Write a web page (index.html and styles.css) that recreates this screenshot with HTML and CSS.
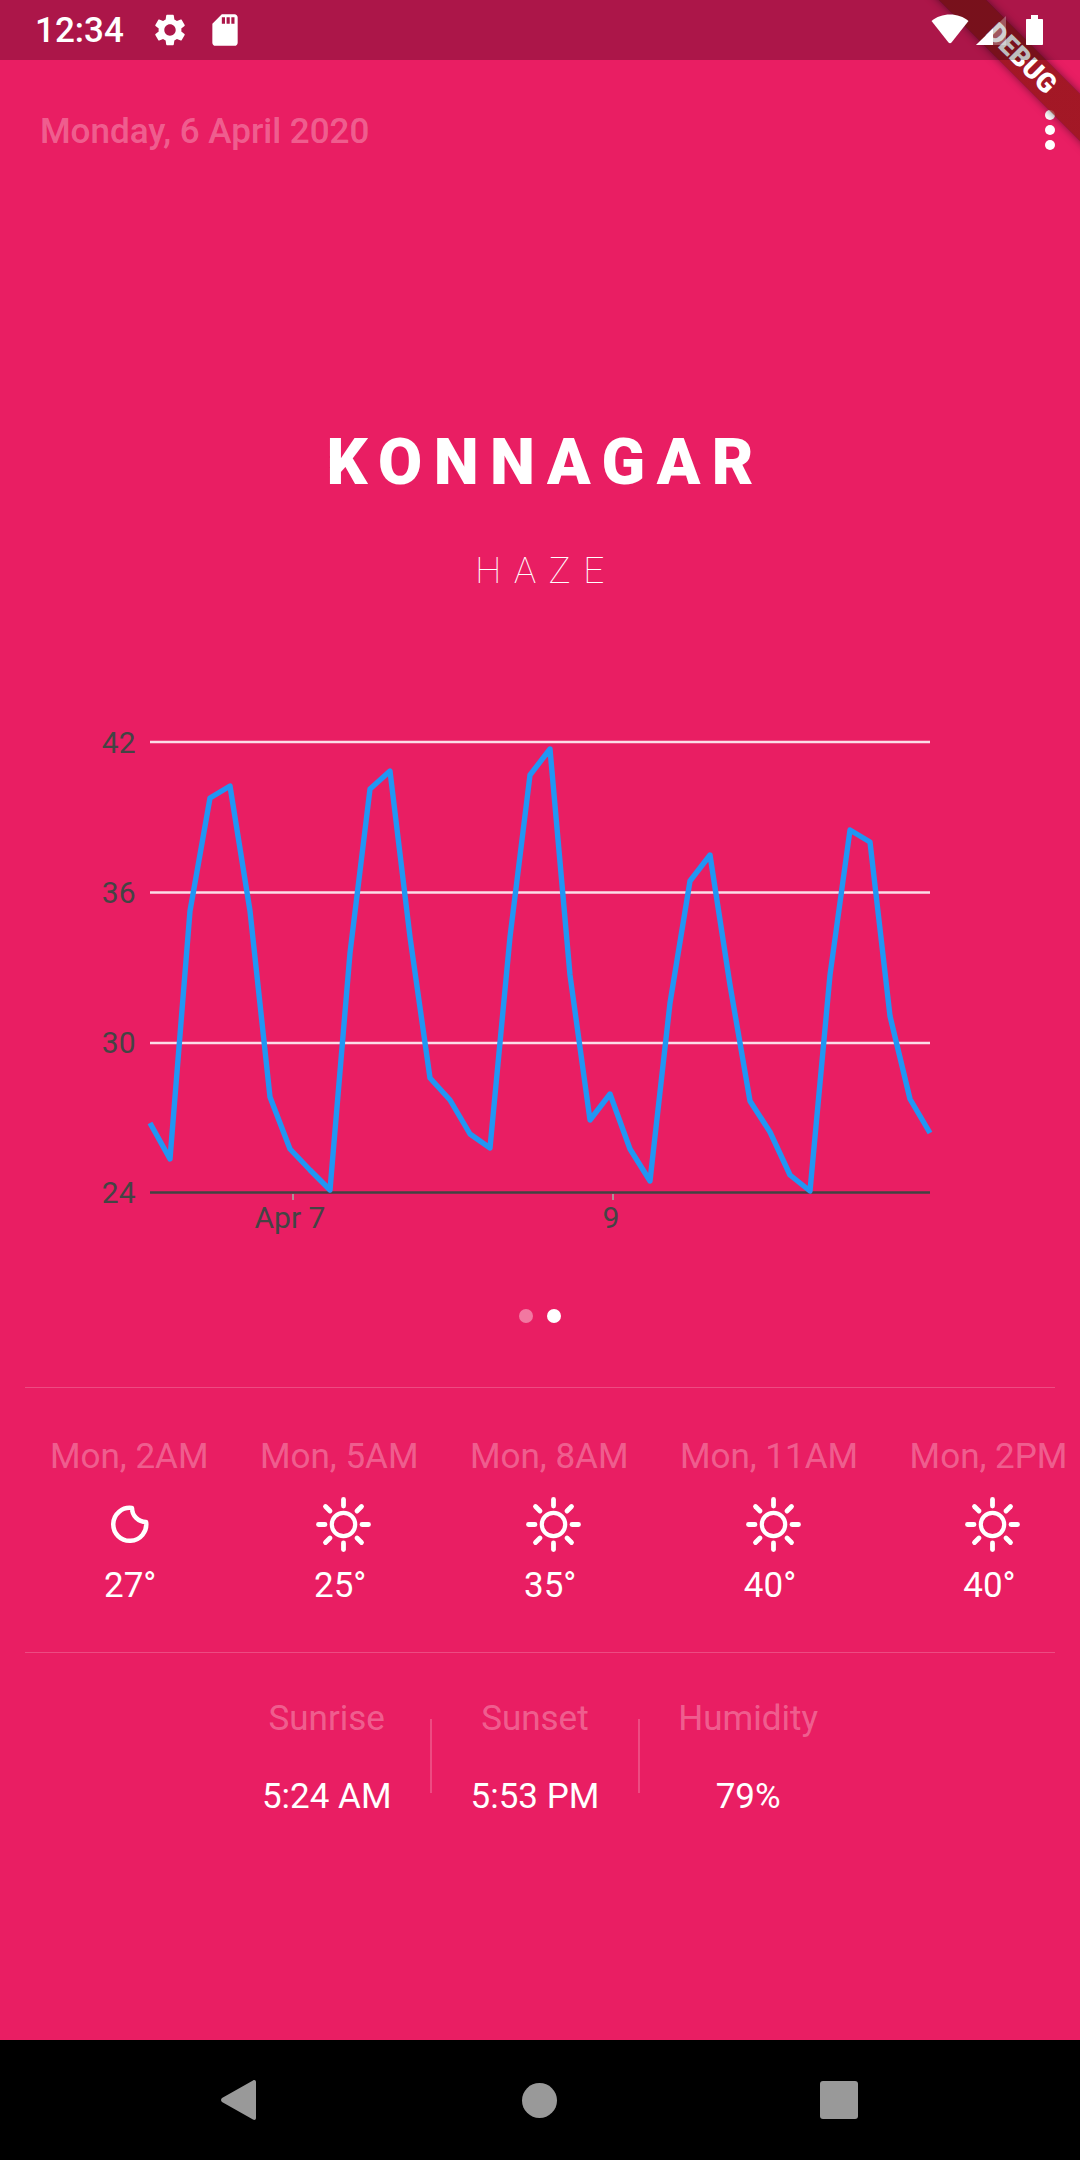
FILE: index.html
```html
<!DOCTYPE html>
<html lang="en">
<head>
    <meta charset="UTF-8">
    <title>Weather</title>
    <link rel="stylesheet" href="styles.css">
</head>
<body>
<div class="app">

    <!-- Status bar -->
    <header class="status-bar">
        <span class="clock">12:34</span>
        <svg class="icon-gear" viewBox="0 0 24 24"><path d="M19.14,12.94c0.04-0.3,0.06-0.61,0.06-0.94c0-0.32-0.02-0.64-0.07-0.94l2.03-1.58c0.18-0.14,0.23-0.41,0.12-0.61l-1.92-3.32c-0.12-0.22-0.37-0.29-0.59-0.22l-2.39,0.96c-0.5-0.38-1.03-0.7-1.62-0.94L14.4,2.81c-0.04-0.24-0.24-0.41-0.48-0.41h-3.84c-0.24,0-0.43,0.17-0.47,0.41L9.25,5.35C8.66,5.59,8.12,5.92,7.63,6.29L5.24,5.33c-0.22-0.08-0.47,0-0.59,0.22L2.74,8.87C2.62,9.08,2.66,9.34,2.86,9.48l2.03,1.58C4.84,11.36,4.8,11.69,4.8,12s0.02,0.64,0.07,0.94l-2.03,1.58c-0.18,0.14-0.23,0.41-0.12,0.61l1.92,3.32c0.12,0.22,0.37,0.29,0.59,0.22l2.39-0.96c0.5,0.38,1.03,0.7,1.62,0.94l0.36,2.54c0.05,0.24,0.24,0.41,0.48,0.41h3.84c0.24,0,0.44-0.17,0.47-0.41l0.36-2.54c0.59-0.24,1.13-0.56,1.62-0.94l2.39,0.96c0.22,0.08,0.47,0,0.59-0.22l1.92-3.32c0.12-0.22,0.07-0.47-0.12-0.61L19.14,12.94z M12,15.6c-1.98,0-3.6-1.62-3.6-3.6s1.62-3.6,3.6-3.6s3.6,1.62,3.6,3.6S13.98,15.6,12,15.6z"/></svg>
        <svg class="icon-sd" viewBox="0 0 24 24"><path d="M18 2h-8L4.02 8 4 20c0 1.1.9 2 2 2h12c1.1 0 2-.9 2-2V4c0-1.1-.9-2-2-2zm-6 6h-2V4h2v4zm3 0h-2V4h2v4zm3 0h-2V4h2v4z"/></svg>
        <div class="status-right">
            <svg class="icon-wifi" viewBox="0 0 38 30"><path d="M0.500 7C5.500 2.800 12 0.500 19 0.500S32.500 2.800 37.500 7L20.500 28.500c-0.800 1-2.200 1-3 0z"/></svg>
            <svg class="icon-signal" viewBox="0 0 30 29"><path class="signal-empty" d="M0 29L30 0v29z"/><path d="M0 29L17 12.600V29z"/></svg>
            <svg class="icon-battery" viewBox="0 0 17 30"><path d="M5 0h7v4h4c.6 0 1 .4 1 1v24c0 .6-.4 1-1 1H1c-.6 0-1-.4-1-1V5c0-.6.4-1 1-1h4z"/></svg>
        </div>
    </header>

    <main class="content">
        <div class="top-row">
            <span class="date">Monday, 6 April 2020</span>
            <div class="menu-dots"><i></i><i></i><i></i></div>
        </div>

        <h1 class="city">KONNAGAR</h1>
        <p class="condition">HAZE</p>

        <!-- Temperature chart -->
        <svg class="chart" viewBox="0 720 1080 520">
            <g class="grid">
                <line x1="150" y1="742" x2="930" y2="742"/>
                <line x1="150" y1="892.5" x2="930" y2="892.5"/>
                <line x1="150" y1="1043" x2="930" y2="1043"/>
            </g>
            <line class="axis" x1="150" y1="1192.5" x2="930" y2="1192.5"/>
            <line class="tick" x1="293" y1="1194" x2="293" y2="1200"/>
            <line class="tick" x1="613" y1="1194" x2="613" y2="1200"/>
            <g class="labels">
                <text x="135.500" y="753" text-anchor="end">42</text>
                <text x="135.500" y="903" text-anchor="end">36</text>
                <text x="135.500" y="1053" text-anchor="end">30</text>
                <text x="135.500" y="1203" text-anchor="end">24</text>
                <text x="290" y="1228" text-anchor="middle">Apr 7</text>
                <text x="611" y="1228" text-anchor="middle">9</text>
            </g>
            <polyline class="series" points="150,1123 170,1159 190,911 210,798 230,786 250,911 270,1097 290,1149 310,1170 330,1190 350,953 370,789 390,771 410,937 430,1078 450,1100 470,1134 490,1148 510,937 530,775 550,749 570,975 590,1120 610,1094 630,1149 650,1181 670,1003 690,881 710,855 730,985 750,1101 770,1132 790,1175 810,1191 830,975 850,830 870,842 890,1016 910,1099 930,1133"/>
        </svg>

        <div class="pager"><i></i><i class="on"></i></div>

        <hr class="rule rule-top">

        <!-- Hourly forecast -->
        <section class="hours">
            <div class="hour">
                <span class="faded">Mon, 2AM</span>
                <svg class="icon-weather" viewBox="-27.5 -27.5 55 55"><path class="moon" d="M2.5 -16.5A16.5 16.5 0 1 0 16.6 -2.5A14 14 0 0 1 2.5 -16.5z"/></svg>
                <span class="temp">27°</span>
            </div>
            <div class="hour">
                <span class="faded">Mon, 5AM</span>
                <svg class="icon-weather"><use href="#sun"/></svg>
                <span class="temp">25°</span>
            </div>
            <div class="hour">
                <span class="faded">Mon, 8AM</span>
                <svg class="icon-weather"><use href="#sun"/></svg>
                <span class="temp">35°</span>
            </div>
            <div class="hour">
                <span class="faded">Mon, 11AM</span>
                <svg class="icon-weather"><use href="#sun"/></svg>
                <span class="temp">40°</span>
            </div>
            <div class="hour">
                <span class="faded">Mon, 2PM</span>
                <svg class="icon-weather"><use href="#sun"/></svg>
                <span class="temp">40°</span>
            </div>
        </section>

        <hr class="rule rule-bottom">

        <!-- Sunrise, sunset, humidity -->
        <section class="stats">
            <div class="stat">
                <span class="faded">Sunrise</span>
                <span class="stat-value">5:24 AM</span>
            </div>
            <div class="stat-sep"></div>
            <div class="stat">
                <span class="faded">Sunset</span>
                <span class="stat-value">5:53 PM</span>
            </div>
            <div class="stat-sep"></div>
            <div class="stat">
                <span class="faded">Humidity</span>
                <span class="stat-value">79%</span>
            </div>
        </section>
    </main>

    <!-- Android navigation -->
    <footer class="nav-bar">
        <svg class="nav-back" viewBox="0 0 35 40"><path d="M32 .5c1.5-1 3-.2 3 1.5v36c0 1.7-1.500 2.500-3 1.500L1 22c-1.300-1-1.300-3 0-4z"/></svg>
        <span class="nav-home"></span>
        <span class="nav-recent"></span>
    </footer>

    <div class="debug-banner">DEBUG</div>

    <!-- Shared sun icon -->
    <svg class="defs" width="0" height="0">
        <symbol id="sun" viewBox="-31.500 -27.500 55 55" overflow="visible">
            <circle class="sun-core" r="11.700"/>
            <g class="sun-rays">
                <line y1="-25" y2="-18.500"/>
                <line y1="25" y2="18.500"/>
                <line x1="-25" x2="-18.500"/>
                <line x1="25" x2="18.500"/>
                <line x1="-18" y1="-18" x2="-13.500" y2="-13.500"/>
                <line x1="18" y1="-18" x2="13.500" y2="-13.500"/>
                <line x1="-18" y1="18" x2="-13.500" y2="13.500"/>
                <line x1="18" y1="18" x2="13.500" y2="13.500"/>
            </g>
        </symbol>
    </svg>
</div>
</body>
</html>
```

FILE: styles.css
```css
body {
    margin: 0;
    font-family: Roboto, "Liberation Sans", sans-serif;
    background-color: #000;
}

.app {
    position: relative;
    width: 1080px;
    height: 2160px;
    overflow: hidden;
    display: flex;
    flex-direction: column;
    background-color: #E91E63;
    color: #fff;
}

/* Status bar: a scrim that lies over the app and its ribbon */
.status-bar {
    position: relative;
    z-index: 2;
    height: 60px;
    flex: none;
    display: flex;
    align-items: center;
    padding-left: 35px;
    background-color: rgba(0, 0, 0, 0.26);
    fill: #fff;
}

.clock {
    font-size: 35px;
    font-weight: 500;
    line-height: 41px;
}

.icon-gear {
    width: 38px;
    height: 38px;
    margin-left: 27px;
}

.icon-sd {
    width: 38px;
    height: 38px;
    margin-left: 17px;
}

.status-right {
    display: flex;
    align-items: flex-end;
    margin: -2px 0 0 687px;
    height: 31px;
}

.icon-wifi {
    width: 38px;
    height: 30px;
    margin-bottom: 1px;
}

.icon-signal {
    width: 30px;
    height: 29px;
    margin-left: 7px;
}

.signal-empty {
    opacity: 0.3;
}

.icon-battery {
    width: 17px;
    height: 30px;
    margin-left: 20px;
}

/* Main column */
.content {
    flex: 1;
}

.top-row {
    display: flex;
    justify-content: space-between;
    align-items: flex-start;
    padding: 50px 25px 0 40px;
}

.date {
    font-size: 35px;
    font-weight: 500;
    line-height: 43px;
    color: rgba(255, 255, 255, 0.3);
}

.menu-dots {
    display: flex;
    flex-direction: column;
    gap: 5px;
}

.menu-dots i {
    width: 10px;
    height: 10px;
    border-radius: 50%;
    background-color: #fff;
}

.city {
    margin: 271px 0 0;
    padding-left: 11.5px;
    font-size: 64px;
    font-weight: 900;
    line-height: 78px;
    letter-spacing: 11.5px;
    text-align: center;
}

.condition {
    margin: 47px 0 0;
    padding-left: 12px;
    font-size: 37px;
    font-weight: 100;
    line-height: 44px;
    letter-spacing: 12.5px;
    text-align: center;
}

/* Chart */
.chart {
    display: block;
    width: 1080px;
    height: 520px;
    margin-top: 127px;
}

.grid line {
    stroke: rgba(255, 255, 255, 0.85);
    stroke-width: 2.4;
}

.axis {
    stroke: #424242;
    stroke-width: 2.4;
}

.tick {
    stroke: #b09098;
    stroke-width: 2;
}

.labels text {
    font-size: 30px;
    fill: #444;
}

.series {
    fill: none;
    stroke: #2196F3;
    stroke-width: 5.4;
    stroke-linejoin: round;
}

.pager {
    display: flex;
    justify-content: center;
    gap: 14px;
    margin-top: 69px;
}

.pager i {
    width: 14px;
    height: 14px;
    border-radius: 50%;
    background-color: rgba(255, 255, 255, 0.4);
}

.pager .on {
    background-color: #fff;
}

.rule {
    height: 1px;
    border: none;
    margin: 0 25px;
    background-color: rgba(255, 255, 255, 0.2);
}

.rule-top {
    margin-top: 64px;
}

.rule-bottom {
    margin-top: 46px;
}

/* Hourly forecast */
.hours {
    display: flex;
    gap: 51.5px;
    margin-top: 49px;
    padding-left: 50px;
}

.hour {
    display: flex;
    flex-direction: column;
    align-items: center;
    font-size: 35px;
    line-height: 40px;
}

.faded {
    color: rgba(255, 255, 255, 0.3);
    font-size: 35px;
    line-height: 40px;
}

.icon-weather {
    width: 55px;
    height: 55px;
    margin-top: 20px;
    overflow: visible;
}

.moon {
    fill: none;
    stroke: #fff;
    stroke-width: 4.5;
    stroke-linejoin: round;
}

.sun-core {
    fill: none;
    stroke: #fff;
    stroke-width: 4.2;
}

.sun-rays line {
    stroke: #fff;
    stroke-width: 4.8;
    stroke-linecap: round;
}

.temp {
    margin: 14px 0 0 2px;
}

.defs {
    position: absolute;
}

/* Bottom stats */
.stats {
    display: flex;
    justify-content: center;
    gap: 38.5px;
    margin-top: 46px;
}

.stat {
    display: flex;
    flex-direction: column;
    align-items: center;
}

.stat-value {
    margin-top: 38px;
    font-size: 35px;
    line-height: 40px;
}

.stat-sep {
    width: 2px;
    height: 74px;
    margin-top: 20px;
    background-color: rgba(255, 255, 255, 0.2);
}

/* Navigation bar */
.nav-bar {
    height: 120px;
    flex: none;
    display: flex;
    justify-content: center;
    align-items: center;
    gap: 266px;
    padding-right: 2px;
    background-color: #000;
}

.nav-back {
    width: 35px;
    height: 40px;
    fill: #999;
}

.nav-home {
    width: 35px;
    height: 35px;
    border-radius: 50%;
    background-color: #999;
}

.nav-recent {
    width: 38px;
    height: 38px;
    margin-left: -3px;
    border-radius: 3px;
    background-color: #999;
}

/* Debug ribbon: Flutter paints the shadow under the ribbon too */
.debug-banner {
    position: absolute;
    top: 44px;
    left: 873px;
    width: 300px;
    height: 33px;
    transform: rotate(45deg);
    background: linear-gradient(rgba(183, 28, 28, 0.63), rgba(183, 28, 28, 0.63)), rgba(0, 0, 0, 0.45);
    box-shadow: 0 0 8px rgba(0, 0, 0, 0.5);
    font-size: 27px;
    font-weight: 900;
    line-height: 33px;
    text-align: center;
    text-indent: -5px;
}
```
